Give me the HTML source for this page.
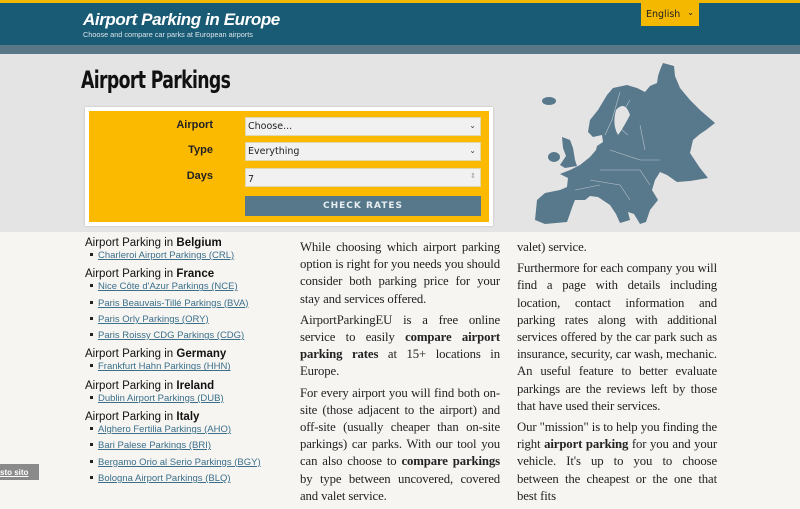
<!DOCTYPE html>
<html><head><meta charset="utf-8"><style>
*{margin:0;padding:0;box-sizing:border-box}
html,body{width:800px;height:480px;overflow:hidden;background:#f6f5f2;font-family:"Liberation Sans",sans-serif}
.top{position:absolute;left:0;top:0;width:800px;height:3px;background:#f5b800}
.hdr{position:absolute;left:0;top:3px;width:800px;height:42px;background:#195a74}
.band{position:absolute;left:0;top:45px;width:800px;height:9px;background:#5a7788}
.hero{position:absolute;left:0;top:54px;width:800px;height:178px;background:#e4e4e4}
.t1{position:absolute;left:83px;top:7px;color:#fff;font-style:italic;font-weight:bold;font-size:17px;letter-spacing:-0.4px}
.t2{position:absolute;left:83px;top:27px;color:#dbe6ec;font-size:7.3px}
.lang{position:absolute;left:641px;top:3px;width:58px;height:23px;background:#f5b800;font-family:"DejaVu Sans",sans-serif;font-size:9.5px;color:#222;padding:6px 0 0 5px}
.lang span{position:absolute;right:5px;top:5px;font-size:8px}
h1{position:absolute;left:81px;top:66px;font-family:"DejaVu Sans Condensed","Liberation Sans Narrow",sans-serif;font-weight:bold;font-size:24px;color:#111;letter-spacing:-0.8px;transform:scaleX(.8);transform-origin:left}
.form{position:absolute;left:85px;top:107px;width:408px;height:119px;background:#fbb900;border:4px solid #fff;box-shadow:0 0 2px #bbb}
.lbl{position:absolute;right:276px;font-weight:bold;font-size:11px;color:#222}
.inp{position:absolute;left:156px;width:236px;height:19px;background:#f1f1f1;border:1px solid #e0d6b0;font-family:"DejaVu Sans",sans-serif;font-size:9.5px;color:#222;padding:3px 0 0 2px}
.inp span{position:absolute;right:4px;top:3px;font-size:8px;color:#444}
.btn{position:absolute;left:156px;top:85px;width:236px;height:20px;background:#56788a;color:#e8eef2;font-family:"DejaVu Sans",sans-serif;font-weight:bold;font-size:9px;letter-spacing:1px;text-align:center;padding-top:5px}
.list{position:absolute;left:85px;top:236px;width:210px}
.list h3{font-weight:normal;font-size:11.5px;color:#111;line-height:14px}
.list h3 b{font-weight:bold}
.list ul{list-style:none;margin:-2px 0 3px 0}
.list li{font-size:9.5px;line-height:16.3px;padding-left:5px}
.list li:before{content:"";display:inline-block;width:3px;height:3px;background:#222;margin-right:5px;vertical-align:2px}
.list li a{color:#3b6f8a;text-decoration:underline}
.col{position:absolute;top:239px;width:200px;font-family:"Liberation Serif",serif;font-size:12.75px;letter-spacing:-0.12px;line-height:17.2px;color:#222;text-align:justify}
.col p{margin-bottom:4px}
.badge{position:absolute;left:0;top:464px;width:39px;height:16px;background:#8a8a8a;color:#fff;font-size:8px;font-weight:bold;padding:4px 0 0 0;text-decoration:underline}
</style></head><body>
<div class="top"></div>
<div class="hdr"><div class="t1">Airport Parking in Europe</div><div class="t2">Choose and compare car parks at European airports</div></div>
<div class="lang">English<span>⌄</span></div>
<div class="band"></div>
<div class="hero">
<svg width="800" height="178" style="position:absolute;left:0;top:0">
<g fill="#58788b" transform="translate(0,-54)">
<polygon points="663,63 674,66 675,76 680,88 690,100 700,110 715,123 706,130 700,134 693,140 690,153 700,168 708,178 690,181 677,182 667,175 660,172 655,180 652,190 658,200 650,210 646,222 640,224 634,214 628,212 630,220 620,223 616,214 610,205 598,197 590,196 585,200 575,200 573,205 567,222 545,224 535,220 537,200 545,193 560,190 567,187 568,178 560,174 570,170 580,165 590,157 596,150 597,146 603,142 602,135 593,137 588,132 590,120 598,110 607,95 613,88 627,85 637,88 645,92 650,86 657,83 658,76 660,70"/>
<polygon points="562,137 570,140 573,148 575,160 577,166 565,168 560,165 566,156 563,148"/>
<ellipse cx="554" cy="157" rx="6" ry="5"/>
<ellipse cx="549" cy="101" rx="7" ry="4"/>
</g>
<g stroke="#b9c6cf" stroke-width="0.6" fill="none" transform="translate(0,-54)">
<path d="M620,92 L612,120 L605,135 M630,100 Q620,115 622,130 L628,135 M610,150 L640,160 L660,160 M600,170 L640,170 L650,185 M590,180 L620,185 L630,200 M640,125 L645,150 M575,190 L600,185"/>
</g>
<g fill="#e4e4e4" transform="translate(0,-54)"><path d="M616,110 Q625,100 630,115 Q622,130 618,135 Q612,125 616,110Z"/></g>
</svg>
</div>
<h1>Airport Parkings</h1>
<div class="form">
<div class="lbl" style="top:8px">Airport</div>
<div class="lbl" style="top:33px">Type</div>
<div class="lbl" style="top:59px">Days</div>
<div class="inp" style="top:6px">Choose...<span>⌄</span></div>
<div class="inp" style="top:31px">Everything<span>⌄</span></div>
<div class="inp" style="top:57px;padding-top:5px">7<span style="font-size:7px;color:#999">⇕</span></div>
<div class="btn">CHECK RATES</div>
</div>
<div class="list">
<h3>Airport Parking in <b>Belgium</b></h3>
<ul><li><a>Charleroi Airport Parkings (CRL)</a></li></ul>
<h3>Airport Parking in <b>France</b></h3>
<ul><li><a>Nice Côte d'Azur Parkings (NCE)</a></li><li><a>Paris Beauvais-Tillé Parkings (BVA)</a></li><li><a>Paris Orly Parkings (ORY)</a></li><li><a>Paris Roissy CDG Parkings (CDG)</a></li></ul>
<h3>Airport Parking in <b>Germany</b></h3>
<ul><li><a>Frankfurt Hahn Parkings (HHN)</a></li></ul>
<h3>Airport Parking in <b>Ireland</b></h3>
<ul><li><a>Dublin Airport Parkings (DUB)</a></li></ul>
<h3>Airport Parking in <b>Italy</b></h3>
<ul><li><a>Alghero Fertilia Parkings (AHO)</a></li><li><a>Bari Palese Parkings (BRI)</a></li><li><a>Bergamo Orio al Serio Parkings (BGY)</a></li><li><a>Bologna Airport Parkings (BLQ)</a></li></ul>
</div>
<div class="col" style="left:300px">
<p>While choosing which airport parking option is right for you needs you should consider both parking price for your stay and services offered.</p>
<p>AirportParkingEU is a free online service to easily <b>compare airport parking rates</b> at 15+ locations in Europe.</p>
<p>For every airport you will find both on-site (those adjacent to the airport) and off-site (usually cheaper than on-site parkings) car parks. With our tool you can also choose to <b>compare parkings</b> by type between uncovered, covered and valet service.</p>
</div>
<div class="col" style="left:517px">
<p>valet) service.</p>
<p>Furthermore for each company you will find a page with details including location, contact information and parking rates along with additional services offered by the car park such as insurance, security, car wash, mechanic. An useful feature to better evaluate parkings are the reviews left by those that have used their services.</p>
<p>Our "mission" is to help you finding the right <b>airport parking</b> for you and your vehicle. It's up to you to choose between the cheapest or the one that best fits</p>
</div>
<div class="badge">sto sito</div>
</body></html>
